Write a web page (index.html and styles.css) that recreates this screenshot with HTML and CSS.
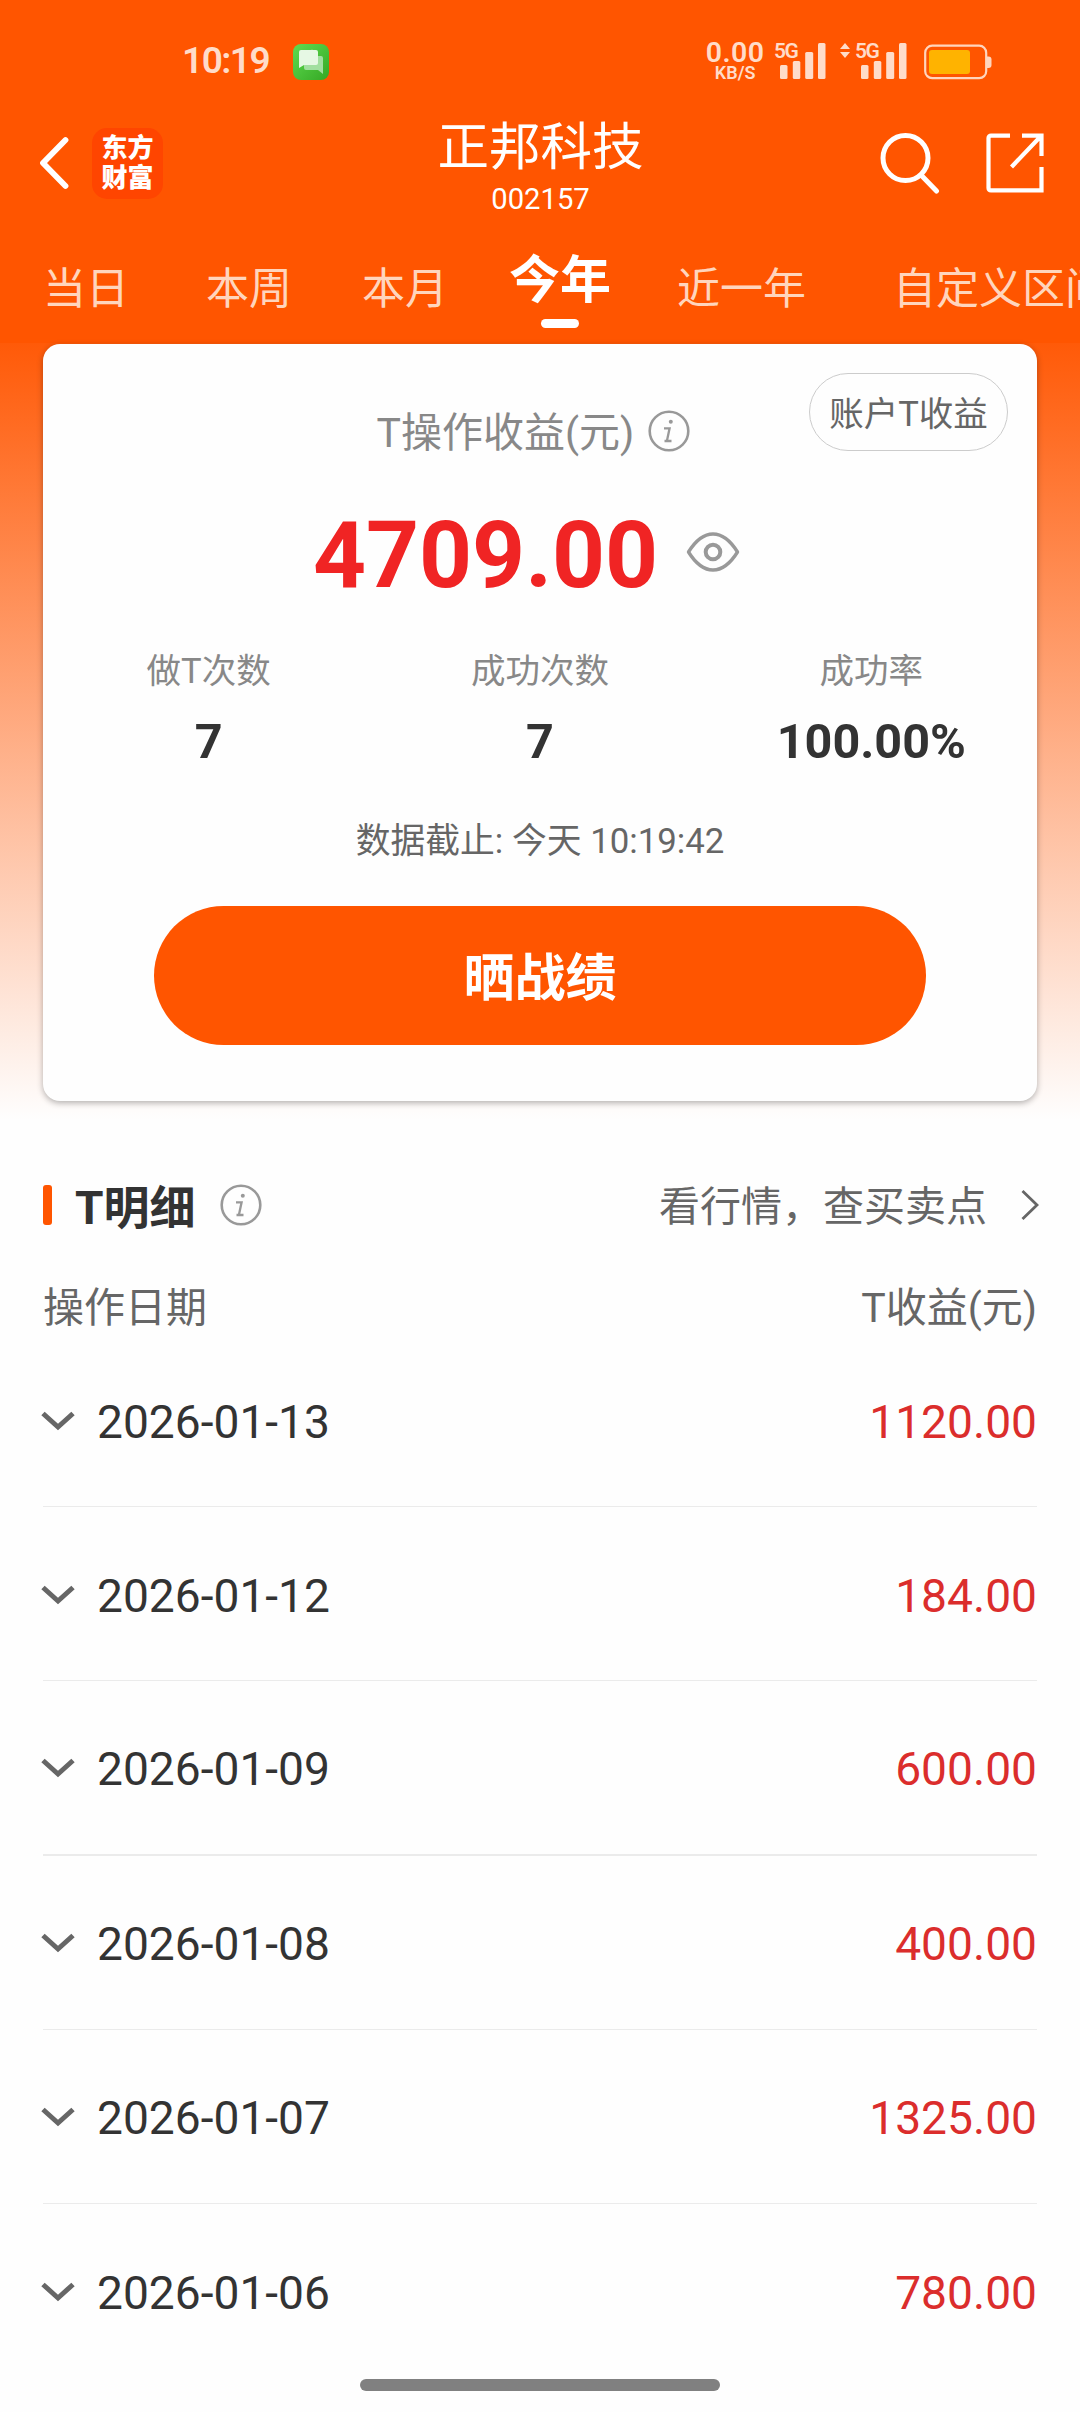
FILE: index.html
```html
<!DOCTYPE html>
<html lang="zh-CN">
<head>
<meta charset="utf-8">
<title>正邦科技</title>
<link rel="stylesheet" href="styles.css">
</head>
<body>
<svg class="defs" width="0" height="0">
  <symbol id="info" viewBox="0 0 42 42">
    <circle cx="21" cy="21" r="19.3" fill="none" stroke="#999" stroke-width="2.6"/>
    <circle cx="22.8" cy="11.8" r="2" fill="#999"/>
    <path d="M16 18.300h5.600l-2.600 12.200M16.500 31h7" fill="none" stroke="#999" stroke-width="2.300"/>
  </symbol>
  <symbol id="signal" viewBox="0 0 46 36">
    <rect x="0" y="22" width="7.5" height="14" rx="1.5"/><rect x="12.8" y="18" width="7.5" height="18" rx="1.5"/>
    <rect x="25.2" y="9" width="8" height="27" rx="1.5"/><rect x="38" y="0" width="7.5" height="36" rx="1.5"/>
  </symbol>
  <symbol id="down" viewBox="0 0 34 20">
    <path d="M2 2.5 17 16 32 2.5" fill="none" stroke="#666" stroke-width="5"/>
  </symbol>
</svg>
<header class="header">
  <div class="status">
    <span class="time">10:19</span>
    <svg class="msg" width="36" height="36" viewBox="0 0 36 36">
      <defs><linearGradient id="g" x1="0" y1="0" x2="1" y2="1"><stop offset="0" stop-color="#5fdc50"/><stop offset="1" stop-color="#35a824"/></linearGradient></defs>
      <rect width="36" height="36" rx="8" fill="url(#g)"/>
      <path d="M13 12h15a2 2 0 0 1 2 2v16l-5-4H13a2 2 0 0 1-2-2V14a2 2 0 0 1 2-2z" fill="#a2dfa0"/>
      <path d="M8 6h10a2 2 0 0 1 2 0h3a2 2 0 0 1 2 2v11a2 2 0 0 1-2 2H11l-5 3V8a2 2 0 0 1 2-2z" fill="#e6f8e4"/>
    </svg>
    <div class="speed"><span class="rate">0.00</span><span class="unit">KB/S</span></div>
    <div class="sim"><span class="net">5G</span><svg class="bars" width="46" height="36"><use href="#signal"/></svg></div>
    <svg class="updown" width="10" height="15" viewBox="0 0 10 15"><path d="M0 6 5 0l5 6zM0 9h10l-5 6z"/></svg>
    <div class="sim"><span class="net">5G</span><svg class="bars" width="46" height="36"><use href="#signal"/></svg></div>
    <svg class="battery" width="68" height="36" viewBox="0 0 68 36">
      <rect x="1.200" y="1.700" width="61" height="32.500" rx="7" fill="none" stroke="#ffd5bd" stroke-width="2.200"/>
      <rect x="5" y="6" width="41" height="24" rx="3" fill="#ffb300"/>
      <path d="M63 12.500h1.500a3 3 0 0 1 3 3v5.500a3 3 0 0 1-3 3H63z" fill="#ffd5bd"/>
    </svg>
  </div>
  <nav class="nav">
    <div class="left">
      <svg width="30" height="54" viewBox="0 0 30 54"><path d="M26.500 4 4 27 26.500 50" fill="none" stroke="#fff" stroke-width="5.800" stroke-linecap="round" stroke-linejoin="round"/></svg>
      <div class="logo"><span>东方</span><span>财富</span></div>
    </div>
    <div class="title"><h1>正邦科技</h1><span>002157</span></div>
    <div class="right">
      <svg width="60" height="62" viewBox="0 0 60 62" fill="none" stroke="#fff" stroke-width="5"><circle cx="25.500" cy="26" r="22.500"/><path d="M41 43 56.500 59" stroke-linecap="round"/></svg>
      <svg width="58" height="60" viewBox="0 0 58 60" fill="none" stroke="#fff" stroke-width="4.200"><path d="M24 2.600H5a2.500 2.500 0 0 0-2.500 2.500V55A2.500 2.500 0 0 0 5 57.400H55.500V34"/><path d="M36 2.600H55.500V23M55 3 25.500 34"/></svg>
    </div>
  </nav>
  <div class="tabs">
    <span class="tab">当日</span>
    <span class="tab t2">本周</span>
    <span class="tab t3">本月</span>
    <span class="tab active">今年</span>
    <span class="tab t5">近一年</span>
    <span class="tab t6">自定义区间</span>
  </div>
</header>
<main>
  <section class="hero">
    <div class="card">
      <button class="account">账户T收益</button>
      <div class="caption"><span>T操作收益(元)</span><svg width="42" height="42"><use href="#info"/></svg></div>
      <div class="amount">4709.00<svg class="eye" width="54" height="42" viewBox="0 0 54 42" fill="none" stroke="#999" stroke-width="3.400"><path d="M2.500 21C10 9 18 3 27 3s17 6 24.500 18C44 33 36 39 27 39S10 33 2.500 21z" stroke-linejoin="round"/><circle cx="27" cy="21" r="7.300" stroke-width="4"/></svg></div>
      <div class="stats">
        <div><span class="label">做T次数</span><b>7</b></div>
        <div><span class="label">成功次数</span><b>7</b></div>
        <div><span class="label">成功率</span><b>100.00%</b></div>
      </div>
      <div class="asof">数据截止: 今天 10:19:42</div>
      <button class="share">晒战绩</button>
    </div>
  </section>
  <section class="details">
    <div class="heading">
      <i class="mark"></i><h2>T明细</h2><svg width="42" height="42"><use href="#info"/></svg>
      <span class="more">看行情，查买卖点</span>
      <svg class="go" width="18" height="32" viewBox="0 0 18 32"><path d="M1.500 2 16 16 1.500 30" fill="none" stroke="#666" stroke-width="2.800"/></svg>
    </div>
    <div class="cols"><span>操作日期</span><span>T收益(元)</span></div>
    <ul class="list">
      <li><svg width="34" height="20"><use href="#down"/></svg><span>2026-01-13</span><em>1120.00</em></li>
      <li><svg width="34" height="20"><use href="#down"/></svg><span>2026-01-12</span><em>184.00</em></li>
      <li><svg width="34" height="20"><use href="#down"/></svg><span>2026-01-09</span><em>600.00</em></li>
      <li><svg width="34" height="20"><use href="#down"/></svg><span>2026-01-08</span><em>400.00</em></li>
      <li><svg width="34" height="20"><use href="#down"/></svg><span>2026-01-07</span><em>1325.00</em></li>
      <li><svg width="34" height="20"><use href="#down"/></svg><span>2026-01-06</span><em>780.00</em></li>
    </ul>
  </section>
</main>
<div class="home"></div>
</body>
</html>
```
FILE: styles.css
```css
* { box-sizing: border-box; margin: 0; padding: 0; }
body {
  width: 1080px; height: 2412px; overflow: hidden; background: #fefefe;
  font-family: Roboto, "Noto Sans CJK SC", sans-serif; font-size: 41px; color: #333;
}
.defs { position: absolute; }
svg { display: block; flex: none; }
button { font: inherit; border: 0; white-space: nowrap; }
.header { height: 343px; background: #ff5500; color: #fff; overflow: hidden; }

.status { height: 110px; padding: 43px 88px 0 182px; display: flex; color: #ffdcc9; fill: #ffdcc9; }
.time { font-size: 37px; line-height: 36px; font-weight: 600; width: 112px; letter-spacing: -1.5px; }
.msg { margin-top: 1px; }
.speed { display: flex; flex-direction: column; align-items: center; margin-left: 375px; width: 62px; font-weight: 600; }
.rate { font-size: 28.500px; line-height: 19px; letter-spacing: .5px; }
.unit { font-size: 18px; line-height: 18px; margin-top: 2px; }
.sim { display: flex; width: 52px; margin-left: 8px; }
.net { font-size: 21px; line-height: 16px; font-weight: 600; width: 6px; letter-spacing: -1.5px; }
.updown { margin: 0 -3px 0 14px; }
.battery { margin: 1px 0 0 17px; }

.nav { height: 106px; padding: 0 38px 0 39px; display: grid; grid-template-columns: 1fr auto 1fr; align-items: center; }
.left, .right { display: flex; align-items: center; margin-top: -1px; }
.left { gap: 23px; }
.right { justify-content: flex-end; gap: 46px; margin-right: -2px; }
.logo {
  width: 71px; height: 71px; border-radius: 15px; background: #ff4500;
  display: flex; flex-direction: column; align-items: center; justify-content: center;
  font-size: 26px; line-height: 30px; font-weight: 900;
}
.title { align-self: start; padding: 12px 0 0; margin-right: 0; display: flex; flex-direction: column; align-items: center; }
.title h1 { font-size: 51.500px; line-height: 52px; font-weight: 400; }
.title span { font-size: 29.200px; line-height: 35px; margin-top: 8px; }

.tabs { display: flex; height: 127px; padding-left: 43px; white-space: nowrap; }
.tab { font-size: 43px; line-height: 60px; margin-top: 43px; color: #ffd5bd; flex: none; }
.t2 { margin-left: 77px; }
.t3 { margin-left: 70px; }
.active { margin: 35px 0 0 61px; font-size: 51px; font-weight: 700; color: #fff; display: flex; flex-direction: column; align-items: center; }
.active::after { content: ""; width: 38px; height: 9px; border-radius: 5px; background: #fff; margin-top: 8px; }
.t5 { margin-left: 66px; }
.t6 { margin-left: 87px; }

.hero { height: 777px; padding: 1px 43px 0; background: linear-gradient(#ff5a08, #fefefe); }
.card {
  position: relative; height: 757px; padding-top: 57px; border-radius: 17px; background: #fefefe;
  box-shadow: 0 2px 6px rgba(0, 0, 0, .3); display: flex; flex-direction: column; align-items: center;
}
.account {
  position: absolute; top: 29px; right: 29px; width: 199px; height: 78px; padding-bottom: 3px; border: 1.500px solid #ccc; border-radius: 40px;
  background: none; color: #666; font-size: 34.500px;
}
.caption { height: 60px; display: flex; align-items: center; gap: 14px; color: #888; margin-right: 13px; }
.caption span { margin-top: -5px; }
.amount { height: 110px; margin: 39px 27px 0 0; display: flex; align-items: center; gap: 28px; font-size: 92.500px; font-weight: 700; color: #f02424; }
.eye { margin-top: -7px; }
.stats { align-self: stretch; margin-top: 36px; display: grid; grid-template-columns: repeat(3, 1fr); }
.stats div { display: flex; flex-direction: column; align-items: center; }
.label { font-size: 34.500px; line-height: 50px; color: #888; }
.stats b { font-size: 48.500px; line-height: 51px; margin-top: 20px; }
.asof { font-size: 34.800px; line-height: 50px; margin-top: 49px; color: #666; }
.share { width: 772px; height: 139px; padding-bottom: 4px; margin-top: 40px; border-radius: 70px; background: #ff5500; color: #fff; font-size: 51px; font-weight: 700; }

.details { padding: 56px 43px 0; }
.heading { height: 58px; display: flex; align-items: center; }
.mark { width: 9px; height: 40px; border-radius: 3px; background: #ff5500; }
.heading h2 { font-size: 46px; font-weight: 700; margin: -3px 24px 0 23px; }
.more { margin: -4px 0 0 auto; color: #666; }
.go { margin: 0 -2px 0 34px; }
.cols { height: 50px; margin-top: 45px; display: flex; justify-content: space-between; align-items: center; color: #666; }
.list { list-style: none; margin-top: 4px; }
.list li { height: 174.200px; padding-top: 4px; border-bottom: 1px solid #ebebeb; display: flex; align-items: center; font-size: 46.150px; }
.list li:nth-child(3) { border-width: 2px; }
.list li:last-child { border: 0; }
.list svg { margin: -2px 22px 0 -2px; }
.list em { margin-left: auto; font-style: normal; color: #db2d2c; }
.home { position: absolute; left: 360px; top: 2379px; width: 360px; height: 12px; border-radius: 6px; background: #808080; }
```
